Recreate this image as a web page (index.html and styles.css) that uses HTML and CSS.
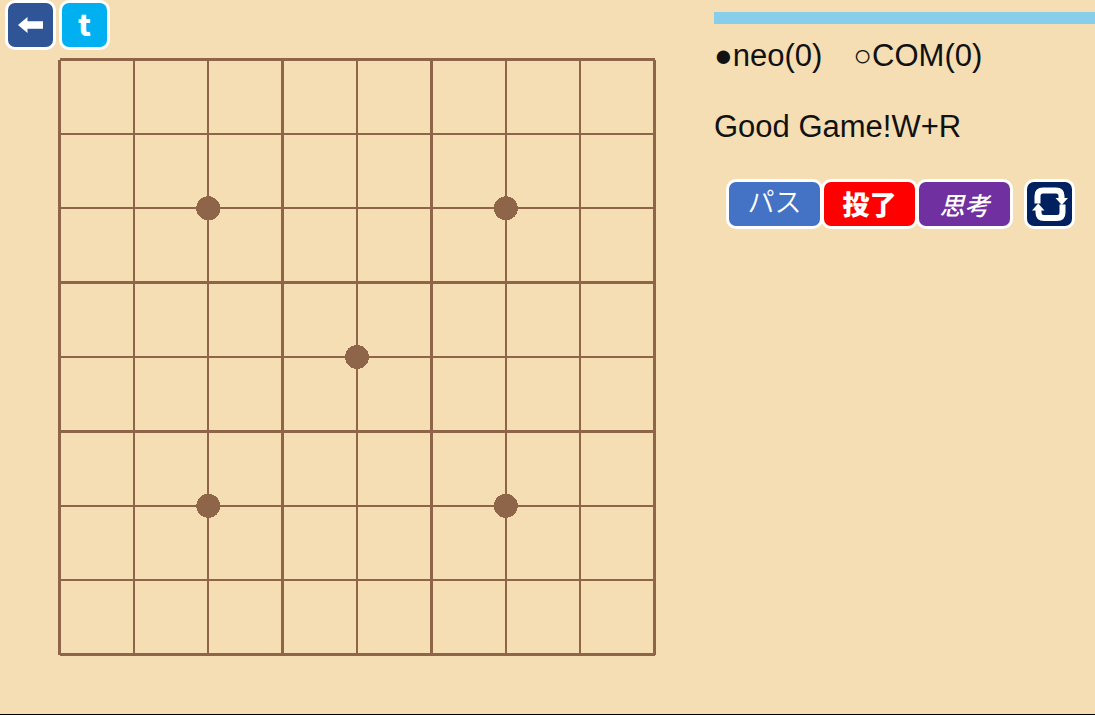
FILE: index.html
```
<!DOCTYPE html>
<html lang="ja">
<head>
<meta charset="utf-8">
<meta name="viewport" content="width=device-width, initial-scale=1">
<title>Go</title>
<link rel="stylesheet" href="styles.css">
</head>
<body>
<main class="game">
  <section class="board-area">
    <svg class="board" viewBox="0 0 714 714" role="img" aria-label="9x9 board">
      <g class="grid thick">
        <path d="M60 59.500H655M60 282.500H655M60 431.500H655M60 654.500H655"/>
        <path d="M59.500 60V655M282.500 60V655M431.500 60V655M654.500 60V655"/>
      </g>
      <g class="grid thin">
        <path d="M60 134H655M60 208H655M60 357H655M60 506H655M60 580H655"/>
        <path d="M134 60V655M208 60V655M357 60V655M506 60V655M580 60V655"/>
      </g>
      <g class="stars">
        <circle cx="208.300" cy="208.300" r="12"/>
        <circle cx="505.800" cy="208.300" r="12"/>
        <circle cx="357" cy="357" r="12"/>
        <circle cx="208.300" cy="505.800" r="12"/>
        <circle cx="505.800" cy="505.800" r="12"/>
      </g>
    </svg>
    <nav class="toolbar">
      <button class="btn icon back" type="button" aria-label="Back">
        <svg viewBox="0 0 26 18"><path d="M0 9 9.500 1V5.200H25V12.800H9.500V17Z"/></svg>
      </button>
      <button class="btn icon tweet" type="button">t</button>
    </nav>
  </section>
  <aside class="panel">
    <div class="timer"></div>
    <p class="players"><span>●neo(0)</span><span>○COM(0)</span></p>
    <p class="message">Good Game!W+R</p>
    <div class="actions">
      <button class="btn pass" type="button">パス</button>
      <button class="btn resign" type="button">投了</button>
      <button class="btn think" type="button">思考</button>
      <button class="btn icon reset" type="button" aria-label="Restart">
        <svg viewBox="0 0 36 36"><path class="loop" d="M5.500 17.500V10Q5.500 4.500 11 4.500H24Q29.500 4.500 29.500 10V13M30.500 18.500V26.500Q30.500 32 25 32H12Q6.500 32 6.500 26.500V23"/><path d="M23.500 12H36L29.800 19ZM0 24.500H12.500L6.200 17.500Z"/></svg>
      </button>
    </div>
  </aside>
</main>
</body>
</html>
```
FILE: styles.css
```
* { box-sizing: border-box; }

body {
  margin: 0;
  background: #f5deb3;
  color: #111;
  font-family: "Liberation Sans", "Noto Sans CJK JP", sans-serif;
}

.game {
  display: flex;
  min-height: 100vh;
  border-bottom: 1px solid #000;
}

.board-area { position: relative; flex: none; }

.board {
  display: block;
  height: calc(100vh - 1px);
  aspect-ratio: 1;
}

.grid { fill: none; stroke: #8f6549; shape-rendering: crispEdges; }
.thick { stroke-width: 3px; }
.thin { stroke-width: 2px; }
.stars { fill: #8f6549; shape-rendering: crispEdges; }

.toolbar {
  position: absolute;
  top: 0;
  left: 5px;
  display: flex;
  gap: 3px;
}

.btn {
  display: flex;
  align-items: center;
  justify-content: center;
  width: 97px;
  height: 50px;
  padding: 0;
  border: 3px solid #fff;
  border-radius: 10px;
  color: #fff;
  font-family: "Noto Sans CJK JP", sans-serif;
  font-size: 27px;
  line-height: 32px;
}

.icon { width: 51px; }
.btn svg { fill: #fff; }

.back { background: #2f5597; }
.back svg { width: 26px; }
.tweet {
  padding-bottom: 4px;
  background: #00b0f0;
  font-family: "Noto Sans CJK JP", sans-serif;
  font-size: 29px;
  font-weight: 900;
}

.panel { flex: 1; min-width: 0; padding-top: 12px; }
.timer { height: 12px; background: #87ceeb; }

.players, .message {
  margin: 0;
  font-size: 31px;
  line-height: 36px;
}
.players { display: flex; gap: 31px; margin-top: 14px; }
.message { margin-top: 35px; }

.actions {
  display: flex;
  margin-top: 34px;
  padding-left: 12px;
}
.pass { background: #4472c4; font-weight: 350; padding-bottom: 6px; }
.resign { margin-left: -2px; background: #f00; font-weight: 900; }
.think {
  margin-left: -2px;
  background: #7030a0;
  font-weight: 500;
  font-size: 25px;
  font-style: italic;
}
.reset { margin-left: 11px; background: #002060; }
.reset svg { width: 36px; }
.reset .loop { fill: none; stroke: #fff; stroke-width: 6px; }
```
